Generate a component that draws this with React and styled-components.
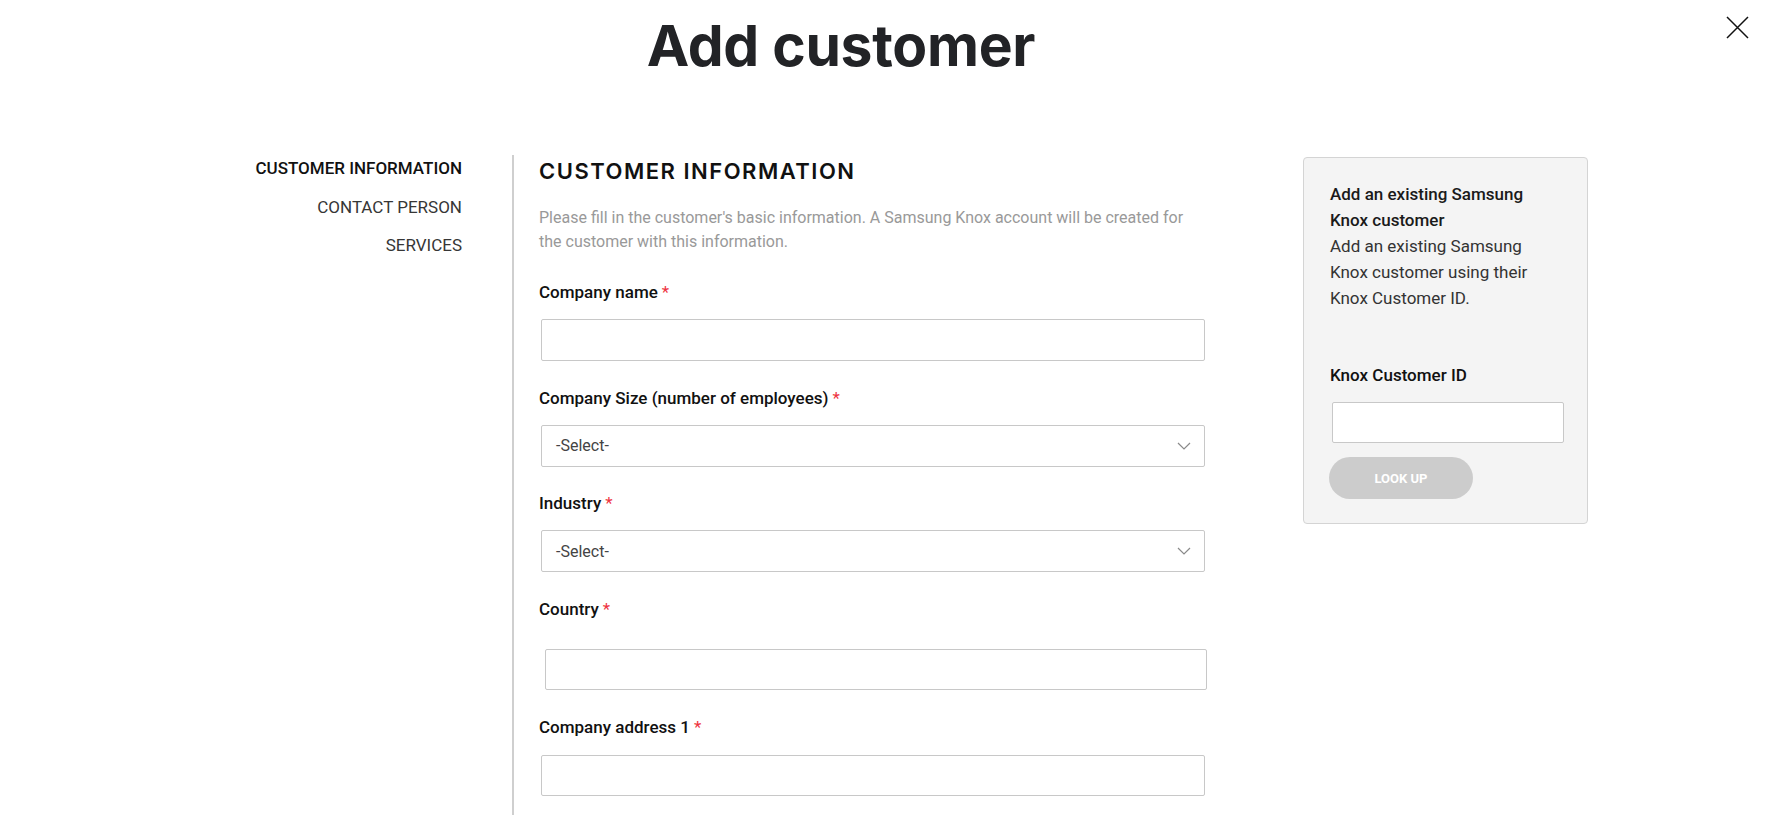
import React from 'react';
import styled, { createGlobalStyle } from 'styled-components';

const GlobalStyle = createGlobalStyle`
  html, body {
    margin: 0;
    padding: 0;
    background: #fff;
  }
  body {
    font-family: Roboto, "Noto Sans", sans-serif;
    color: #111;
  }
  * {
    box-sizing: border-box;
  }
`;

const Page = styled.div`
  position: relative;
  height: 100vh;
  overflow: hidden;
  display: flex;
  flex-direction: column;
`;

const Header = styled.header`
  padding: 17px 97px 0 0;
  text-align: center;
`;

const Title = styled.h1`
  margin: 0;
  font-family: Inter, "Noto Sans", sans-serif;
  font-size: 57px;
  line-height: 57px;
  font-weight: 700;
  letter-spacing: -0.3px;
  color: #222326;
`;

const CloseButton = styled.button`
  position: absolute;
  top: 16px;
  right: 30px;
  width: 23px;
  height: 23px;
  padding: 0;
  border: 0;
  background: none;
  cursor: pointer;
  & svg {
    display: block;
  }
`;

const Body = styled.div`
  flex: 1;
  display: flex;
  align-items: stretch;
  margin-top: 81px;
  padding-left: 200px;
`;

const SideNav = styled.nav`
  align-self: flex-start;
  width: 262px;
  margin-right: 50px;
  padding-top: 1px;
  display: flex;
  flex-direction: column;
  align-items: flex-end;
  gap: 14.5px;
`;

const NavItem = styled.a`
  font-size: 17px;
  line-height: 24px;
  font-weight: ${p => (p.$active ? 500 : 400)};
  color: ${p => (p.$active ? '#111' : '#363636')};
  text-decoration: none;
  white-space: nowrap;
`;

const FormColumn = styled.section`
  width: 695px;
  margin-right: 96px;
  padding: 2px 0 0 25px;
  border-left: 2px solid #cfcfcf;
`;

const SectionTitle = styled.h2`
  margin: 0 0 20.5px;
  font-family: Inter, "Noto Sans", sans-serif;
  font-size: 22px;
  line-height: 28px;
  font-weight: 600;
  letter-spacing: 1.5px;
  color: #111;
`;

const Intro = styled.p`
  margin: 0 0 26.5px;
  font-size: 16px;
  line-height: 24px;
  color: #999;
`;

const Field = styled.div`
  margin-top: ${p => p.$shift || 0}px;
  margin-bottom: 24.5px;
`;

const Label = styled.label`
  display: block;
  margin-bottom: ${p => p.$gap || 15}px;
  font-size: 17px;
  line-height: 24px;
  font-weight: 500;
  color: #111;
  white-space: nowrap;
`;

const Required = styled.span`
  margin-left: 4px;
  font-weight: 400;
  color: #ee3340;
`;

const TextInput = styled.input`
  display: block;
  width: ${p => p.$width || 664}px;
  height: ${p => p.$height || 42}px;
  margin: 0 0 0 ${p => p.$offset ?? 2}px;
  padding: 0 14px;
  border: 1px solid #c8c8c8;
  border-radius: 2px;
  background: #fff;
  font: inherit;
  font-size: 16px;
  outline: none;
`;

const SelectBox = styled.div`
  display: flex;
  align-items: center;
  justify-content: space-between;
  width: 664px;
  height: 42px;
  margin-left: 2px;
  padding: 0 13px 0 14px;
  border: 1px solid #c8c8c8;
  border-radius: 2px;
  background: #fff;
  font-size: 16px;
  color: #444;
  cursor: pointer;
`;

const Panel = styled.aside`
  align-self: flex-start;
  width: 285px;
  margin-top: 2px;
  padding: 23px 20px 24px 26px;
  background: #f4f4f4;
  border: 1px solid #d4d4d4;
  border-radius: 4px;
`;

const PanelTitle = styled.div`
  width: 215px;
  font-size: 17px;
  line-height: 26px;
  font-weight: 500;
  color: #1a1a1a;
`;

const PanelText = styled.p`
  width: 215px;
  margin: 0 0 52px;
  font-size: 17px;
  line-height: 26px;
  color: #333;
`;

const LookUpButton = styled.button`
  display: block;
  width: 144px;
  height: 42px;
  margin: 14px 0 0 -1px;
  border: 0;
  border-radius: 21px;
  background: #cccccc;
  color: #fff;
  font-family: Roboto, sans-serif;
  font-size: 13px;
  font-weight: 700;
  cursor: default;
`;

const Chevron = () => (
  <svg width="14" height="8" viewBox="0 0 14 8" fill="none">
    <path d="M1 1l6 6 6-6" stroke="#8a8a8a" strokeWidth="1.2" />
  </svg>
);

const Select = ({ placeholder }) => (
  <SelectBox>
    <span>{placeholder}</span>
    <Chevron />
  </SelectBox>
);

const App = () => (
  <Page>
    <GlobalStyle />
    <Header>
      <Title>Add customer</Title>
    </Header>
    <CloseButton aria-label="Close">
      <svg width="23" height="23" viewBox="0 0 23 23">
        <path d="M1 1l21 21M22 1L1 22" stroke="#111" strokeWidth="1.5" />
      </svg>
    </CloseButton>

    <Body>
      <SideNav>
        <NavItem $active>CUSTOMER INFORMATION</NavItem>
        <NavItem>CONTACT PERSON</NavItem>
        <NavItem>SERVICES</NavItem>
      </SideNav>

      <FormColumn>
        <SectionTitle>CUSTOMER INFORMATION</SectionTitle>
        <Intro>
          Please fill in the customer's basic information. A Samsung Knox account will be created for
          the customer with this information.
        </Intro>

        <Field>
          <Label>Company name<Required>*</Required></Label>
          <TextInput />
        </Field>
        <Field>
          <Label>Company Size (number of employees)<Required>*</Required></Label>
          <Select placeholder="-Select-" />
        </Field>
        <Field>
          <Label>Industry<Required>*</Required></Label>
          <Select placeholder="-Select-" />
        </Field>
        <Field>
          <Label $gap={28.7}>Country<Required>*</Required></Label>
          <TextInput $offset={6} $width={662} $height={41} />
        </Field>
        <Field $shift={1}>
          <Label $gap={16}>Company address 1<Required>*</Required></Label>
          <TextInput $height={41} />
        </Field>
      </FormColumn>

      <Panel>
        <PanelTitle>Add an existing Samsung Knox customer</PanelTitle>
        <PanelText>Add an existing Samsung Knox customer using their Knox Customer ID.</PanelText>
        <Label>Knox Customer ID</Label>
        <TextInput $width={232} $height={41} />
        <LookUpButton>LOOK UP</LookUpButton>
      </Panel>
    </Body>
  </Page>
);

export default App;
